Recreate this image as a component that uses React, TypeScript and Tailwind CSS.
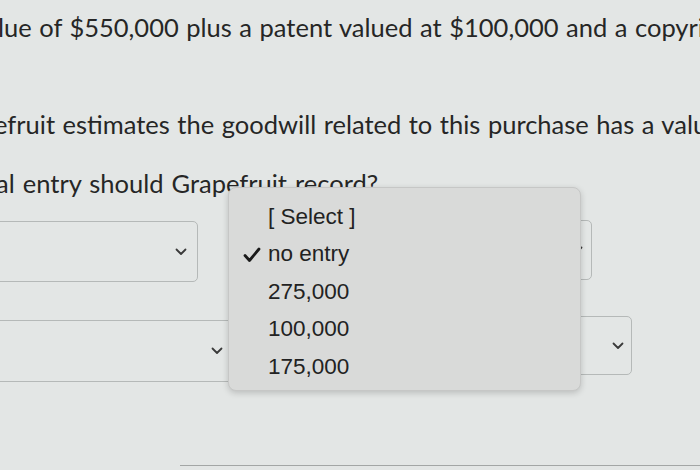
import React from "react";

function Chevron({ className = "" }: { className?: string }) {
  return (
    <svg width="12" height="8" viewBox="0 0 12 8" className={className}>
      <polyline points="1.5,1.5 6,6 10.5,1.5" fill="none" stroke="#3a3a3a" strokeWidth="1.8" strokeLinecap="round" strokeLinejoin="round" />
    </svg>
  );
}

export default function App() {
  const items = ["[ Select ]", "no entry", "275,000", "100,000", "175,000"];
  return (
    <div className="relative w-[700px] h-[470px] overflow-hidden bg-[#e3e6e5] text-[#262626]" style={{ fontFamily: "Lato, 'Open Sans', sans-serif" }}>
      <div className="pt-[12px] text-[25.5px] leading-[30px] whitespace-nowrap">
        <div className="ml-[-2px] [word-spacing:1px]">lue of $550,000 plus a patent valued at $100,000 and a copyright</div>
        <div className="ml-[-6px] mt-[67px] [word-spacing:1px]">efruit estimates the goodwill related to this purchase has a value</div>
        <div className="ml-[-4px] mt-[29px] [word-spacing:1.5px]">al entry should Grapefruit record?</div>
      </div>

      <div className="mt-[23px] flex items-start">
        <div className="ml-[-10px] w-[208px] h-[61px] rounded-[5px] border border-[#b5b9b8] flex items-center justify-end pr-[10px]">
          <Chevron />
        </div>
        <div className="ml-[184px] mt-[-1px] w-[210px] h-[60px] rounded-[5px] border border-[#b5b9b8] flex items-center justify-end pr-[8px]">
          <Chevron />
        </div>
      </div>

      <div className="mt-[34px] flex items-start">
        <div className="ml-[-10px] mt-[4px] w-[244px] h-[62px] rounded-[5px] border border-[#b5b9b8] flex items-center justify-end pr-[10px]">
          <Chevron />
        </div>
        <div className="ml-[216px] w-[182px] h-[59px] rounded-[5px] border border-[#b5b9b8] flex items-center justify-end pr-[7px]">
          <Chevron />
        </div>
      </div>

      <div className="ml-[180px] mt-[83px] h-px bg-[#a3a6a5]" />

      <div
        className="absolute left-[228px] top-[187px] w-[353px] h-[204px] rounded-[8px] bg-[#d9dad9] border border-[#c6c7c6] shadow-[0_2px_6px_rgba(0,0,0,0.18)] pt-[10px]"
        style={{ fontFamily: "'Liberation Sans', Arial, sans-serif" }}
      >
        {items.map((t, i) => (
          <div key={t} className="relative h-[37.5px] flex items-center pl-[39px] text-[22.5px] text-[#222]">
            {i === 1 && (
              <svg width="18" height="16" viewBox="0 0 18 16" className="absolute left-[14px] top-[11px]">
                <polyline points="2,8.5 6.5,13.5 16,2" fill="none" stroke="#1a1a1a" strokeWidth="2.8" strokeLinecap="round" strokeLinejoin="round" />
              </svg>
            )}
            {t}
          </div>
        ))}
      </div>
    </div>
  );
}
